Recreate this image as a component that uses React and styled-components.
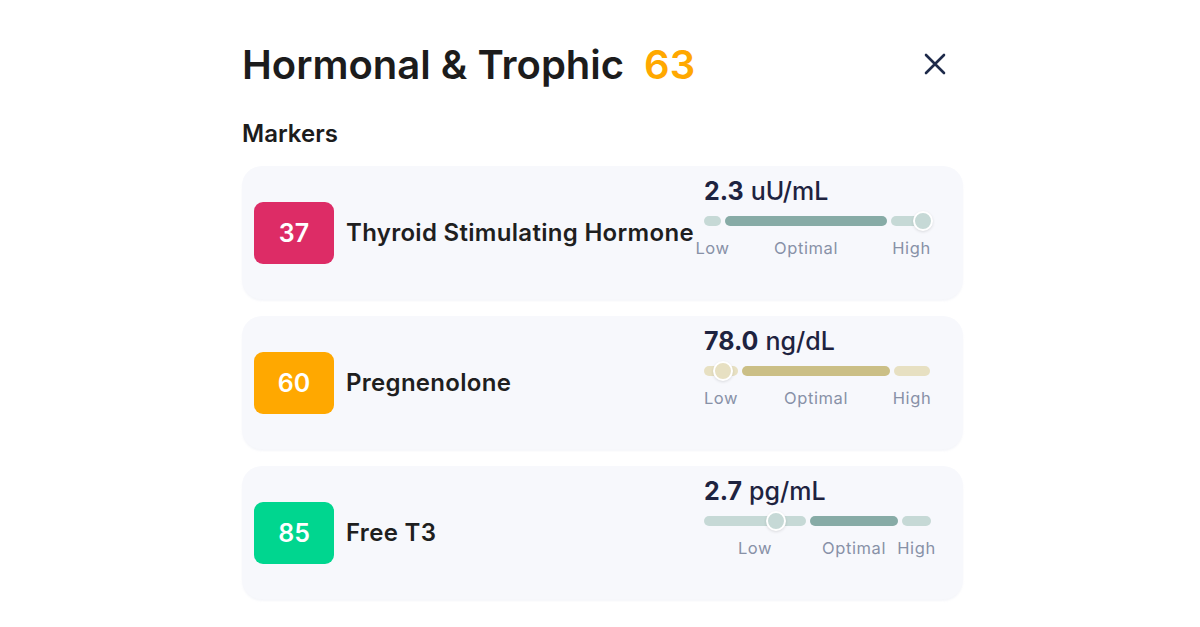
import React from 'react';
import styled, { createGlobalStyle } from 'styled-components';

/* ─── Data ──────────────────────────────────────────────────────────── */

const PALETTES = {
  teal: { light: '#c6d9d6', dark: '#87aba6' },
  khaki: { light: '#e7e0c2', dark: '#cbbf86' },
};

const MARKERS = [
  {
    score: 37,
    color: '#dd2c66',
    name: 'Thyroid Stimulating Hormone',
    value: '2.3',
    unit: 'uU/mL',
    palette: 'teal',
    segments: [17, 162, 41],
    thumb: 219,
  },
  {
    score: 60,
    color: '#ffa800',
    name: 'Pregnenolone',
    value: '78.0',
    unit: 'ng/dL',
    palette: 'khaki',
    segments: [34, 148, 36],
    thumb: 19,
  },
  {
    score: 85,
    color: '#00d68f',
    name: 'Free T3',
    value: '2.7',
    unit: 'pg/mL',
    palette: 'teal',
    segments: [102, 88, 29],
    thumb: 72,
  },
];

/* ─── Styled components ──────────────────────────────────────────────── */

const GlobalStyle = createGlobalStyle`
  body {
    margin: 0;
    background: #ffffff;
    font-family: Inter, "Noto Sans", sans-serif;
  }
`;

const Page = styled.div`
  width: 1200px;
  height: 627px;
  padding: 40px 0 0 242px;
  box-sizing: border-box;
`;

const Panel = styled.div`
  width: 721px;
`;

const Header = styled.div`
  display: flex;
  align-items: center;
  justify-content: space-between;
  height: 48px;
`;

const Title = styled.h1`
  margin: 0;
  font-size: 40px;
  font-weight: 600;
  color: #1c1c1c;
`;

const TitleScore = styled.span`
  color: #ffa800;
  margin-left: 20px;
`;

const CloseButton = styled.button`
  border: none;
  background: none;
  padding: 0;
  margin-right: 14px;
  width: 28px;
  height: 28px;
  display: flex;
  align-items: center;
  justify-content: center;
  cursor: pointer;
`;

const SectionTitle = styled.h2`
  margin: 31px 0 18px;
  font-size: 24px;
  font-weight: 600;
  color: #1c1c1c;
`;

const List = styled.div`
  display: flex;
  flex-direction: column;
  gap: 17px;
`;

const Card = styled.div`
  height: 133px;
  box-sizing: border-box;
  background: #f7f8fc;
  border-radius: 20px;
  padding: 0 31px 0 12px;
  display: flex;
  align-items: center;
  box-shadow: 0 2px 2px rgba(230, 233, 242, 0.4);
`;

const Badge = styled.div`
  width: 80px;
  height: 62px;
  border-radius: 9px;
  background: ${p => p.color};
  color: #ffffff;
  font-size: 25px;
  font-weight: 600;
  display: flex;
  align-items: center;
  justify-content: center;
  flex-shrink: 0;
`;

const Name = styled.div`
  margin-left: 12px;
  flex: 1;
  font-size: 24px;
  font-weight: 600;
  letter-spacing: 0.3px;
  color: #1f1f1f;
  white-space: nowrap;
`;

const Reading = styled.div`
  align-self: flex-start;
  padding-top: 10px;
  width: 228px;
  flex-shrink: 0;
`;

const Value = styled.div`
  height: 30px;
  display: flex;
  align-items: baseline;
  gap: 7px;
  color: #1e2340;
  font-size: 25px;
`;

const ValueNumber = styled.span`
  font-weight: 700;
`;

const ValueUnit = styled.span`
  font-weight: 500;
`;

const Track = styled.div`
  position: relative;
  margin-top: 10px;
  display: flex;
  gap: 4px;
  height: 10px;
`;

const Segment = styled.div`
  height: 10px;
  border-radius: 5px;
  background: ${p => p.color};
  flex-shrink: 0;
`;

const Thumb = styled.div`
  position: absolute;
  top: 50%;
  width: 20px;
  height: 20px;
  box-sizing: border-box;
  border-radius: 50%;
  border: 2.5px solid #ffffff;
  background: ${p => p.color};
  transform: translate(-50%, -50%);
  box-shadow: 0 1px 3px rgba(0, 0, 0, 0.12);
`;

const Labels = styled.div`
  display: flex;
  gap: 4px;
  margin-top: 12px;
`;

const Label = styled.div`
  flex-shrink: 0;
  display: flex;
  justify-content: center;
  white-space: nowrap;
  font-size: 16.5px;
  letter-spacing: 0.6px;
  color: #8891a7;
`;

/* ─── Component ─────────────────────────────────────────────────────── */

const CloseIcon = () => (
  <svg width="24" height="24" viewBox="0 0 24 24" fill="none">
    <path d="M3 3 L21 21 M21 3 L3 21" stroke="#1e2a4a" strokeWidth="2.6" strokeLinecap="round" />
  </svg>
);

const LABELS = ['Low', 'Optimal', 'High'];

const MarkerCard = ({ marker }) => {
  const pal = PALETTES[marker.palette];
  return (
    <Card>
      <Badge color={marker.color}>{marker.score}</Badge>
      <Name>{marker.name}</Name>
      <Reading>
        <Value>
          <ValueNumber>{marker.value}</ValueNumber>
          <ValueUnit>{marker.unit}</ValueUnit>
        </Value>
        <Track>
          {marker.segments.map((w, i) => (
            <Segment key={i} color={i === 1 ? pal.dark : pal.light} style={{ width: w }} />
          ))}
          <Thumb color={pal.light} style={{ left: marker.thumb }} />
        </Track>
        <Labels>
          {marker.segments.map((w, i) => (
            <Label key={i} style={{ width: w }}>{LABELS[i]}</Label>
          ))}
        </Labels>
      </Reading>
    </Card>
  );
};

const App = () => (
  <>
    <GlobalStyle />
    <Page>
      <Panel>
        <Header>
          <Title>
            Hormonal &amp; Trophic
            <TitleScore>63</TitleScore>
          </Title>
          <CloseButton aria-label="Close">
            <CloseIcon />
          </CloseButton>
        </Header>
        <SectionTitle>Markers</SectionTitle>
        <List>
          {MARKERS.map(m => (
            <MarkerCard key={m.name} marker={m} />
          ))}
        </List>
      </Panel>
    </Page>
  </>
);

export default App;
